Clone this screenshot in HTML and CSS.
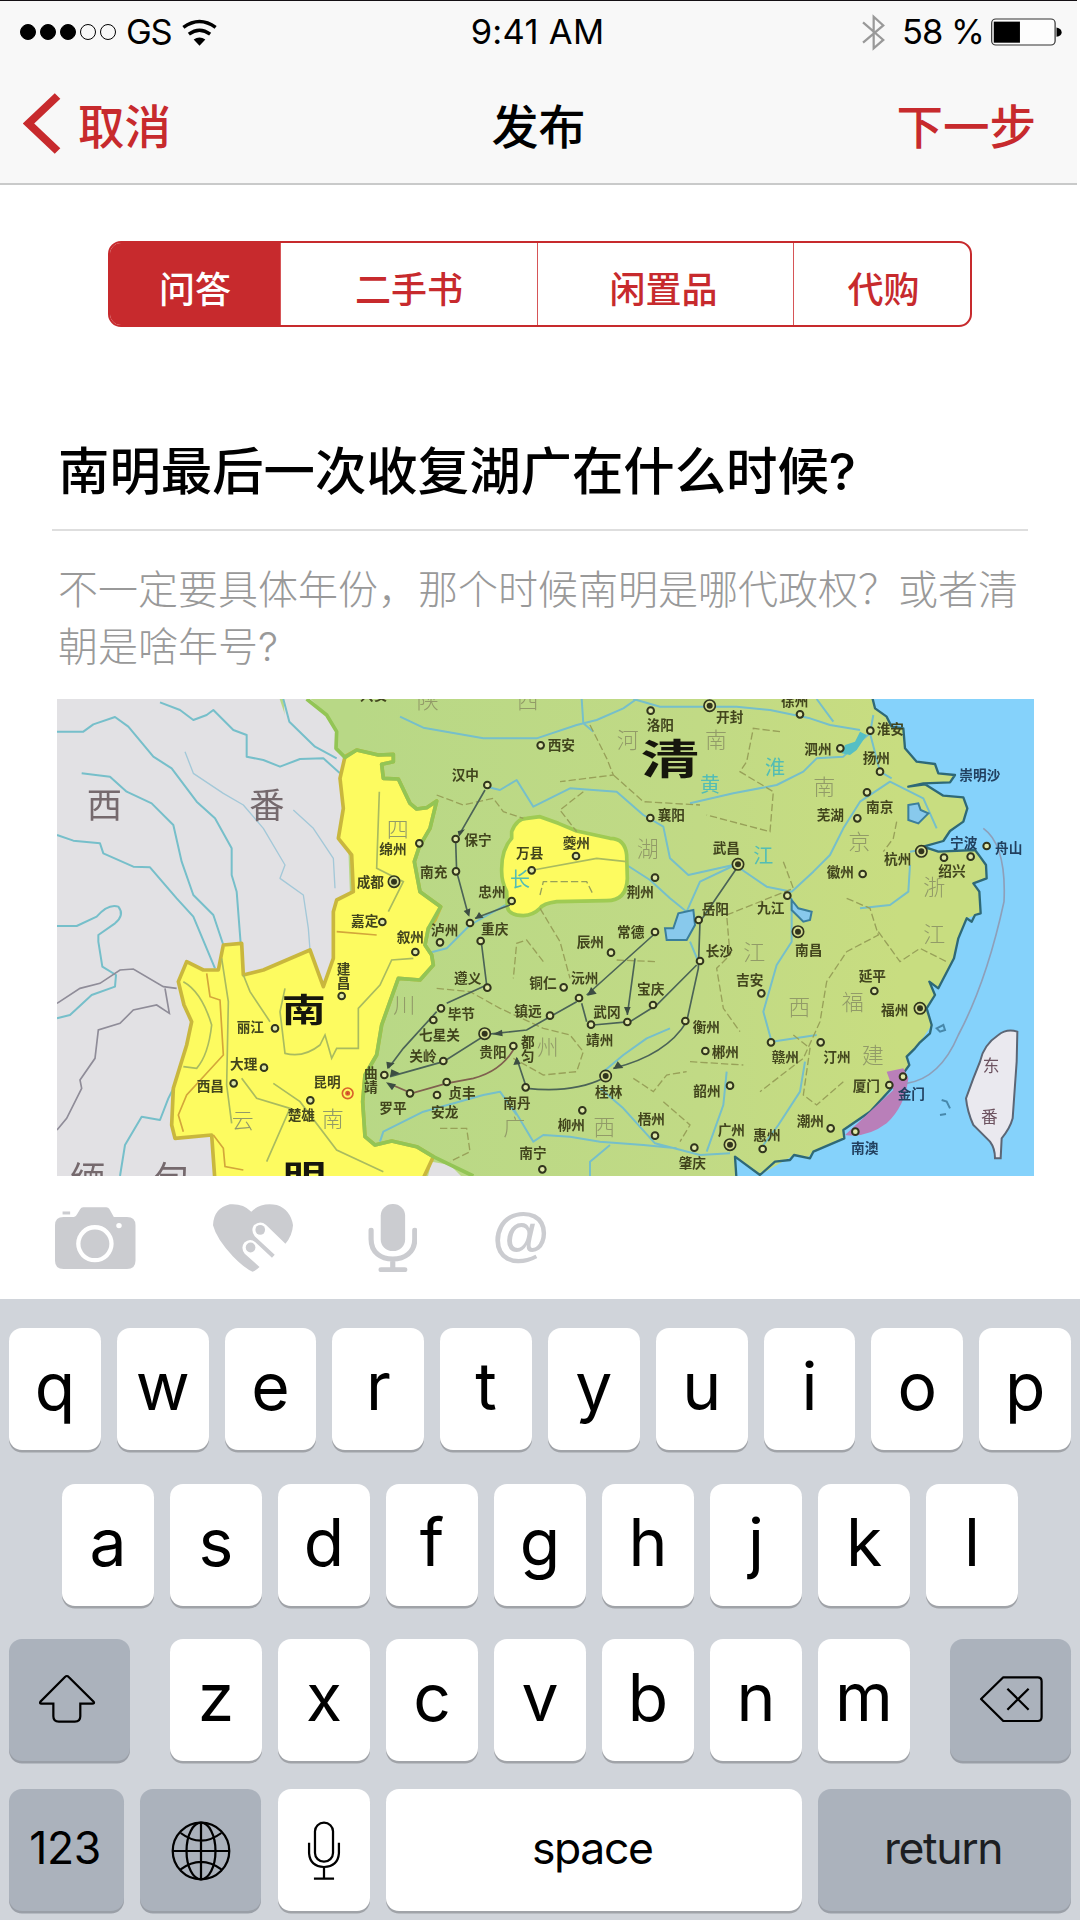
FILE: index.html
```html
<!DOCTYPE html>
<html lang="zh-CN">
<head>
<meta charset="utf-8">
<title>发布</title>
<link rel="stylesheet" href="styles.css">
</head>
<body>
<div class="screen">
  <header class="header">
    <div class="status">
      <div class="status-left">
        <span class="signal"><i class="dot on"></i><i class="dot on"></i><i class="dot on"></i><i class="dot"></i><i class="dot"></i></span>
        <span class="carrier">GS</span>
        <svg class="wifi" viewBox="533 52 102 80" preserveAspectRatio="none"><g fill="none" stroke="#000" stroke-width="10"><path d="M537 77Q584 42 631 77"/><path d="M553 97Q584 74 615 97"/></g><path d="M567 113Q584 101 601 113L584 131Z"/></svg>
      </div>
      <div class="time">9:41 AM</div>
      <div class="status-right">
        <svg class="bluetooth" viewBox="934 38 67 110" preserveAspectRatio="none"><path d="M937 63L996 115L968 140V46L996 72L937 123" fill="none" stroke="#999" stroke-width="6.5"/></svg>
        <span class="percent">58 %</span>
        <svg class="battery" viewBox="1309 48 206 85" preserveAspectRatio="none"><rect x="1311" y="51" width="184" height="79" rx="12" fill="#fdfdfd" stroke="#333" stroke-width="3.5"/><path d="M1317 59H1393V123H1317Z"/><path d="M1499 77Q1514 80 1514 92Q1514 102 1499 105Z"/></svg>
      </div>
    </div>
    <nav class="nav">
      <a class="back"><svg viewBox="66 278 110 182" preserveAspectRatio="none"><path d="M166 287L82 369L166 451" fill="none" stroke="#c72a2d" stroke-width="23"/></svg><span>取消</span></a>
      <h1>发布</h1>
      <a class="next">下一步</a>
    </nav>
  </header>

  <main class="editor">
    <div class="segments">
      <span class="segment active">问答</span><span class="segment">二手书</span><span class="segment">闲置品</span><span class="segment">代购</span>
    </div>
    <h2 class="question">南明最后一次收复湖广在什么时候?</h2>
    <p class="detail">不一定要具体年份，那个时候南明是哪代政权？或者清朝是啥年号?</p>

    <svg class="map" viewBox="21 12 2931 1431" preserveAspectRatio="none">
      <defs>
        <filter id="soft" x="0" y="0" width="100%" height="100%"><feGaussianBlur stdDeviation="2.2"/></filter>
        <linearGradient id="land"><stop offset=".3" stop-color="#b8d886"/><stop offset=".65" stop-color="#c1da85"/><stop offset=".85" stop-color="#c8dd80"/></linearGradient>
      </defs>
      <rect x="0" y="0" width="3000" height="1500" fill="url(#land)"/>
      <g filter="url(#soft)">
        <path fill="#e2e1e4" d="M0 0H685L705 60L735 100L800 160L885 190L900 600L860 900L600 1100L500 1460H0Z"/>
        <path fill="#e2e1e4" d="M700 0H770L830 60L860 110L858 160L885 190L800 170L705 80Z"/>
        <path fill="#e2e1e4" d="M1130 1460L1145 1400L1200 1410L1250 1460Z"/>
        <path class="sea" d="M2465 0L2475 40L2510 65L2525 95L2560 100L2565 160L2600 200L2655 207L2665 235L2715 240L2700 262L2620 265L2575 275L2625 268L2680 302L2740 307L2752 340L2740 380L2700 408L2680 438L2620 455L2665 470L2775 465L2790 485L2808 510L2810 550L2770 565L2788 590L2792 655L2750 670L2725 730L2712 790L2665 880L2638 860L2655 900L2630 940L2645 990L2610 1042L2595 1060L2570 1085L2578 1110L2560 1135L2520 1185L2460 1250L2380 1305L2383 1330L2290 1370L2270 1390L2232 1380L2130 1440L2055 1385L2060 1460H3000V0Z"/>
        <g class="river">
          <path d="M21 110H100L130 88L195 66L235 95L310 185L365 220L440 320L495 370L545 460V540L560 590L572 745"/>
          <path d="M95 235L180 245L230 290L305 325L370 390L395 500L430 600L490 660L520 750L510 830L535 920L530 1170L545 1280"/>
          <path d="M21 420L70 437L150 445L160 475L250 515L300 517L380 610L430 665L495 820"/>
          <path d="M330 22L390 45L430 75L470 60L490 45L550 105L590 120V185L640 195L690 215L750 192L820 190L870 235"/>
          <path d="M700 12L718 80L795 155L860 190"/>
          <path d="M21 693H80L140 665Q175 625 205 635Q225 660 195 685L145 720V740L157 815L198 840L195 875L125 900L60 960L21 970"/>
          <path d="M210 1443L225 1350L275 1265L330 1275L355 1210L370 1180"/>
          <path d="M1100 790L1150 770L1190 760L1260 690L1385 620L1440 560L1450 525L1640 490L1730 510L1800 555L1860 610L1910 650L1950 560L2055 510L2150 575L2225 590L2290 530L2340 480L2380 400L2430 320L2520 260L2620 310L2660 400"/>
          <path d="M1050 65L1120 98L1300 130L1460 130L1580 90L1640 75L1720 40L1760 12M1595 12L1600 85L1630 110"/>
          <path d="M1310 275L1350 285L1400 255L1450 335L1560 280L1700 290L1780 360L1840 395L1860 490L1915 540L2060 508"/>
          <path d="M1750 12L1830 35L2060 35L2160 45L2280 70L2340 90L2430 105M2300 12L2350 80M2470 60L2460 115L2400 165L2380 185L2300 190L2260 230L2180 270L2050 295L1920 325M2460 115L2490 230L2525 250"/>
          <path d="M1650 1180L1720 1240L1815 1345L1950 1380L2040 1375M1390 1240L1450 1340L1480 1320L1560 1325L1650 1340L1780 1350L1880 1360M1680 1350L1620 1400V1443M990 1340L1000 1310L1120 1250L1300 1200L1350 1190L1400 1260"/>
          <path d="M1660 1130L1720 1080L1790 1030L1860 1000M1920 740L1945 800M2225 610L2225 740L2180 810L2140 950L2165 1040L2300 1020M2265 1100L2250 1190L2185 1290L2140 1350M2030 1130L2020 1230L1970 1370M2580 510L2575 590L2520 630L2430 640M2640 460L2580 470"/>
          <path class="thin" d="M405 170L430 235L520 295L580 330L640 400L705 510L690 550L760 600L775 700L780 765M730 345L790 400L850 490L855 580"/>
        </g>
        <path d="M2375 175L2385 150L2415 140L2430 110L2450 120L2420 165L2400 180Z" fill="#54bfc4"/>
        <path class="border-gray" d="M21 925L90 880L150 865L210 825L250 822L340 875L380 880M345 880L358 955L320 930L250 945L210 985L145 1005L135 1090L90 1155L95 1180L50 1270L21 1305"/>
        <path class="ming" d="M885 185L920 165L985 180L1030 178V200L995 208L1000 250L1045 252L1080 325L1100 342L1130 338L1160 318L1140 400L1108 455L1093 500L1110 590L1172 635L1155 675L1135 700L1125 750L1145 780L1150 810L1110 855L1045 850L1020 920L995 990L980 1080L945 1140L938 1220L945 1325L975 1350L1025 1338L1100 1355L1150 1385L1115 1460H495L485 1320L375 1330L365 1290L370 1180L410 1050L425 980L402 930L385 860L410 800L460 825L505 825L520 750L575 745L580 840L640 825L780 765L820 875L850 790V650L860 615L910 590L905 480L865 430L880 340L870 250Z"/>
        <path class="green-edge" d="M770 12L830 60L860 110L858 160L885 187L920 165L985 180L1030 178V200L995 208L1000 250L1045 252L1080 325L1100 342L1130 338L1160 318L1140 400L1108 455L1093 500L1110 590L1172 635L1135 700L1125 750L1145 780L1150 810L1110 855L1045 850L1020 920L995 990L980 1080L945 1140L938 1220L945 1325L975 1350L1025 1338L1100 1355L1150 1385L1270 1443"/>
        <path class="ming kui" d="M1385 410Q1400 370 1430 370L1470 365L1525 385L1580 408L1680 430Q1725 430 1730 480L1732 550Q1730 617 1670 617L1520 620Q1480 625 1470 640Q1450 660 1420 662Q1375 660 1372 635L1370 590Q1355 560 1355 530Q1353 465 1385 430Z"/>
        <g class="yellow-lines"><path d="M515 790L535 920L530 1170L545 1285M580 840L600 890L660 980M400 860Q455 890 485 990Q475 1080 440 1120L400 1115M705 880L690 950L705 1075Q760 1090 810 1050L825 1020L845 1090L860 1060H925V940L990 870L1025 795L1090 790M575 1150L620 1210L720 1240L650 1400M670 1165L750 1220L860 1365L1000 1430M988 290L980 520L1060 560L1015 650M1450 525L1640 490L1730 500"/></g>
        <path class="orange-lines" d="M470 835L480 905L510 915L520 1080L465 1140L410 1200L385 1260L400 1310M490 1320L520 1360L525 1415L580 1425M860 710L980 720"/>
        <g class="dashes">
          <path d="M1160 300L1240 330L1330 310L1360 350L1420 370M1620 90L1670 190L1690 240L1530 260M1690 240L1780 320L1950 330M1600 290L1530 345L1580 410M1470 640L1530 740L1560 850M1480 800L1430 735L1400 745L1390 850M1160 880L1260 890L1350 940L1480 1000L1560 1020L1600 1070L1580 1130L1480 1140L1390 1090M1700 795L1820 800M1470 600L1480 560H1610L1630 600"/>
          <path d="M2190 110L2110 100L2090 200L2070 230L2170 290L2160 410L1970 360M2540 380L2530 430L2500 470M2200 500L2230 580L2030 660L2040 780L2000 820L2020 940L2070 1010M2390 610L2460 640L2485 720L2390 770L2330 860L2310 980L2260 1090L2130 1190M2485 710L2550 800L2610 760L2690 800M2230 1020L2280 1060L2260 1200L2300 1230L2380 1160M1920 1100L2080 1110M1750 1150L1810 1190L1850 1140L1910 1130M1840 1220L1920 1290L1890 1340M1170 1300H1250L1260 1370L1200 1400"/>
        </g>
        <path class="coast" d="M2465 0L2475 40L2510 65L2525 95L2560 100L2565 160L2600 200L2655 207L2665 235L2715 240L2700 262L2620 265L2575 275L2625 268L2680 302L2740 307L2752 340L2740 380L2700 408L2680 438L2620 455L2665 470L2775 465L2790 485L2808 510L2810 550L2770 565L2788 590L2792 655L2775 660L2765 680L2750 670L2725 730L2712 790L2665 880L2638 860L2655 900L2630 940L2645 990L2640 1015L2610 1042L2595 1060L2570 1085L2578 1110L2560 1135L2520 1185L2460 1250L2380 1305L2383 1330L2290 1370L2280 1390L2232 1380L2220 1395L2175 1400L2130 1440L2055 1385L2060 1460"/>
        <path d="M2510 1130L2560 1120L2575 1150Q2565 1235 2510 1285Q2450 1330 2385 1320L2460 1250L2530 1185Z" fill="#b97fb9"/>
        <path d="M1845 700L1870 700L1885 655L1930 645L1935 690L1910 735L1850 735ZM2225 615L2245 640L2285 650L2280 675L2260 680L2225 645ZM2575 330L2605 325L2612 345L2635 355L2605 385L2575 375Z" fill="#88c9ec" stroke="#3a7e9b" stroke-width="6"/>
        <path d="M2845 1020Q2870 1000 2902 1010L2900 1100L2895 1170L2888 1270Q2880 1300 2855 1330L2852 1390H2835Q2835 1360 2820 1340L2770 1290Q2752 1250 2748 1210L2770 1150L2790 1100Q2800 1050 2845 1020Z" fill="#eae9ef" stroke="#5c6675" stroke-width="6"/>
        <path d="M2800 400Q2870 450 2862 620Q2810 860 2725 1020Q2670 1150 2570 1165" fill="none" stroke="#8e9fb9" stroke-width="5"/>
        <path d="M2675 1215l15 5l10 20M2670 1260l18-3M2660 1000l20-10l5 15l-15 5Z" fill="none" stroke="#4788ab" stroke-width="6"/>
        <g class="routes">
          <path d="M1305 285L1230 415M1217 440L1220 530L1255 660M1380 630L1275 670M1295 750L1310 870L1190 925M1160 950L1060 1060L1015 1120M1810 720L1610 900M1755 790L1732 960M1580 920L1500 965L1430 1005L1310 1018L1180 1100L1020 1145M1595 925L1610 980M1940 810L1820 930L1740 980L1630 990M2060 520L1950 680L1945 820L1910 980Q1850 1080 1690 1120M1660 1150Q1570 1195 1430 1180L1400 1090"/>
          <path class="maroon" d="M1390 1065Q1350 1130 1270 1150L1190 1165L1085 1195L1015 1165"/>
        </g>
        <path d="M1227 425l18-22-22 6zM1258 665l3-25-20 8zM1275 672l26-4-14-17zM1012 1122l22-17-25-5zM1612 902l28-6-17-20zM1732 960l10-24h-20zM1328 1018l30 6-2-20zM1020 1145l30-10-26-12zM1008 1162l18 24 12-18zM1690 1122l30-3-17-20zM1400 1085l-10 25 22-3z" fill="#3c4d43"/>

        <g class="province">
          <text x="1100" y="40">陕</text><text x="1400" y="40">西</text><text x="1010" y="425">四</text><text x="1030" y="955">川</text><text x="1460" y="1080">州</text><text x="1630" y="1320">西</text><text x="1360" y="1320">广</text><text x="1760" y="485">湖</text><text x="1700" y="160">河</text><text x="1965" y="160">南</text><text x="2290" y="300">南</text><text x="2395" y="465">京</text><text x="2620" y="600">浙</text><text x="2620" y="740">江</text><text x="2080" y="795">江</text><text x="2215" y="960">西</text><text x="2375" y="945">福</text><text x="2435" y="1105">建</text><text x="545" y="1300">云</text><text x="815" y="1295">南</text>
        </g>
        <g class="water"><text x="1380" y="575">长</text><text x="1950" y="290">黄</text><text x="2145" y="240">淮</text><text x="2110" y="505">江</text></g>
        <g class="tribe"><text x="110" y="370">西</text><text x="598" y="370">番</text><text x="60" y="1490">缅</text><text x="310" y="1490">甸</text></g>
        <g class="island"><text x="2798" y="1130">东</text><text x="2793" y="1285">番</text></g>
        <g class="realm"><text transform="translate(1772 236) scale(1.42 1)" font-size="124">清</text><text transform="translate(695 981) scale(1.35 1)" font-size="98">南</text><text transform="translate(698 1482) scale(1.3 1)" font-size="100">明</text></g>

        <g class="city">
          <text x="560" y="1012">丽江</text><text x="540" y="1122">大理</text><text x="440" y="1187">西昌</text><text x="790" y="1175">昆明</text><text x="713" y="1275">楚雄</text><text x="860" y="838">建</text><text x="860" y="878">昌</text><text x="920" y="575">成都</text><text x="903" y="693">嘉定</text>
          <text x="1493" y="165">西安</text><text x="1205" y="255">汉中</text><text x="1243" y="450">保宁</text><text x="1110" y="545">南充</text><text x="988" y="477">绵州</text><text x="1285" y="605">忠州</text><text x="1398" y="490">万县</text><text x="1538" y="458">夔州</text><text x="1143" y="720">泸州</text><text x="1040" y="742">叙州</text><text x="1293" y="716">重庆</text><text x="1212" y="865">遵义</text><text x="1193" y="972">毕节</text><text x="1107" y="1035">七星关</text><text x="1078" y="1098">关岭</text><text x="1288" y="1087">贵阳</text><text x="1413" y="1056">都</text><text x="1413" y="1098">匀</text><text x="1195" y="1210">贞丰</text><text x="1143" y="1265">安龙</text><text x="988" y="1255">罗平</text><text x="942" y="1150">曲</text><text x="942" y="1192">靖</text><text x="1360" y="1240">南丹</text><text x="1523" y="1305">柳州</text><text x="1408" y="1390">南宁</text><text x="1763" y="1287">梧州</text><text x="1635" y="1205">桂林</text><text x="1701" y="725">常德</text><text x="1580" y="755">辰州</text><text x="1438" y="880">铜仁</text><text x="1563" y="865">沅州</text><text x="1393" y="963">镇远</text><text x="1630" y="965">武冈</text><text x="1608" y="1050">靖州</text><text x="1761" y="897">宝庆</text><text x="1928" y="1010">衡州</text><text x="1730" y="607">荆州</text><text x="1823" y="375">襄阳</text><text x="1790" y="105">洛阳</text><text x="1886" y="1420">肇庆</text><text x="930" y="16">兴安</text>
          <text x="1998" y="80">开封</text><text x="2193" y="32">徐州</text><text x="2480" y="118">淮安</text><text x="2263" y="178">泗州</text><text x="2438" y="205">扬州</text><text x="2448" y="352">南京</text><text x="2300" y="374">芜湖</text><text x="1988" y="475">武昌</text><text x="2502" y="508">杭州</text><text x="2665" y="542">绍兴</text><text x="2330" y="545">徽州</text><text x="1955" y="658">岳阳</text><text x="2121" y="655">九江</text><text x="2235" y="780">南昌</text><text x="1967" y="782">长沙</text><text x="2058" y="870">吉安</text><text x="2426" y="858">延平</text><text x="2493" y="960">福州</text><text x="2165" y="1100">赣州</text><text x="2320" y="1102">汀州</text><text x="1985" y="1087">郴州</text><text x="1930" y="1202">韶州</text><text x="2408" y="1187">厦门</text><text x="2240" y="1293">潮州</text><text x="2003" y="1320">广州</text><text x="2110" y="1335">惠州</text>
        </g>
        <g class="city at-sea"><text x="2728" y="255">崇明沙</text><text x="2700" y="460">宁波</text><text x="2835" y="475">舟山</text><text x="2543" y="1212">金门</text><text x="2403" y="1375">南澳</text></g>
        <g class="town">
          <circle cx="675" cy="1000" r="10"/><circle cx="642" cy="1118" r="10"/><circle cx="551" cy="1165" r="10"/><circle cx="781" cy="1216" r="10"/><circle cx="875" cy="903" r="10"/><circle cx="997" cy="681" r="10"/><circle cx="1472" cy="151" r="10"/><circle cx="1312" cy="270" r="10"/><circle cx="1217" cy="432" r="10"/><circle cx="1218" cy="529" r="10"/><circle cx="1108" cy="445" r="10"/><circle cx="1385" cy="618" r="10"/><circle cx="1445" cy="526" r="10"/><circle cx="1578" cy="483" r="10"/><circle cx="1170" cy="742" r="10"/><circle cx="1096" cy="771" r="10"/><circle cx="1260" cy="684" r="10"/><circle cx="1292" cy="738" r="10"/><circle cx="1312" cy="878" r="10"/><circle cx="1173" cy="940" r="10"/><circle cx="1150" cy="975" r="10"/><circle cx="1180" cy="1098" r="10"/><circle cx="1390" cy="1053" r="10"/><circle cx="1190" cy="1161" r="10"/><circle cx="1161" cy="1200" r="10"/><circle cx="1080" cy="1195" r="10"/><circle cx="1003" cy="1140" r="10"/><circle cx="1427" cy="1177" r="10"/><circle cx="1597" cy="1246" r="10"/><circle cx="1477" cy="1423" r="10"/><circle cx="1815" cy="1322" r="10"/><circle cx="1815" cy="711" r="10"/><circle cx="1683" cy="773" r="10"/><circle cx="1541" cy="877" r="10"/><circle cx="1587" cy="909" r="10"/><circle cx="1500" cy="962" r="10"/><circle cx="1732" cy="981" r="10"/><circle cx="1623" cy="989" r="10"/><circle cx="1809" cy="930" r="10"/><circle cx="1906" cy="978" r="10"/><circle cx="1815" cy="548" r="10"/><circle cx="1801" cy="369" r="10"/><circle cx="1802" cy="47" r="10"/><circle cx="1933" cy="1358" r="10"/>
          <circle cx="2250" cy="58" r="10"/><circle cx="2461" cy="107" r="10"/><circle cx="2371" cy="160" r="10"/><circle cx="2490" cy="230" r="10"/><circle cx="2451" cy="292" r="10"/><circle cx="2422" cy="370" r="10"/><circle cx="2762" cy="485" r="10"/><circle cx="2682" cy="488" r="10"/><circle cx="2810" cy="453" r="10"/><circle cx="2438" cy="537" r="10"/><circle cx="1946" cy="675" r="10"/><circle cx="2212" cy="602" r="10"/><circle cx="1950" cy="798" r="10"/><circle cx="2134" cy="895" r="10"/><circle cx="2473" cy="888" r="10"/><circle cx="2163" cy="1042" r="10"/><circle cx="2312" cy="1042" r="10"/><circle cx="1966" cy="1068" r="10"/><circle cx="2040" cy="1172" r="10"/><circle cx="2518" cy="1170" r="10"/><circle cx="2559" cy="1145" r="10"/><circle cx="2342" cy="1300" r="10"/><circle cx="2416" cy="1310" r="10"/><circle cx="2138" cy="1362" r="10"/>
        </g>
        <g class="capital-ring"><circle cx="1032" cy="560" r="17"/><circle cx="1304" cy="1016" r="17"/><circle cx="1667" cy="1143" r="17"/><circle cx="1979" cy="32" r="17"/><circle cx="2064" cy="508" r="17"/><circle cx="2614" cy="469" r="17"/><circle cx="2244" cy="710" r="17"/><circle cx="2610" cy="940" r="17"/><circle cx="2040" cy="1349" r="17"/></g>
        <g class="capital"><circle cx="1032" cy="560" r="9"/><circle cx="1304" cy="1016" r="9"/><circle cx="1667" cy="1143" r="9"/><circle cx="1979" cy="32" r="9"/><circle cx="2064" cy="508" r="9"/><circle cx="2614" cy="469" r="9"/><circle cx="2244" cy="710" r="9"/><circle cx="2610" cy="940" r="9"/><circle cx="2040" cy="1349" r="9"/></g>
        <g fill="none" stroke="#d8642c" stroke-width="5"><circle cx="893" cy="1195" r="16"/><circle cx="893" cy="1195" r="5" fill="#c33"/></g>
      </g>
    </svg>

    <div class="tools">
      <svg class="camera" viewBox="43 50 234 187" preserveAspectRatio="none"><path fill="#cbccd0" fill-rule="evenodd" d="M125 51H192Q198 51 201 56L214 80H252Q277 80 277 105V212Q277 237 252 237H68Q43 237 43 212V105Q43 80 68 80H98Q105 78 108 70L116 57Q119 51 125 51ZM159 104A54 56 0 1 0 159 217A54 56 0 1 0 159 104ZM229 98A8 8 0 1 0 229 114A8 8 0 1 0 229 98Z"/><ellipse cx="159" cy="161" rx="42" ry="43" fill="#cbccd0"/><path d="M65 68H87" stroke="#cbccd0" stroke-width="9"/></svg>
      <svg class="heart" viewBox="501 41 232 205" preserveAspectRatio="none"><path fill="#cbccd0" d="M612 64Q640 35 686 44Q726 58 733 105Q731 136 711 161L655 104Q637 88 619 106Q610 122 622 138L680 194L672 203L624 156Q608 142 592 157Q580 173 593 191L636 231Q625 242 616 245Q593 235 559 199Q511 146 501 105Q503 53 550 42Q588 39 612 64Z"/><ellipse cx="638" cy="119" rx="14" ry="15" fill="#cbccd0"/><ellipse cx="610" cy="172" rx="14" ry="15" fill="#cbccd0"/></svg>
      <svg class="mic" viewBox="950 42 144 205" preserveAspectRatio="none"><rect x="987" y="42" width="71" height="142" rx="35" fill="#cbccd0"/><path d="M959 121V148C959 188 988 208 1022 208S1086 188 1086 148V121M1022 208V240M988 240H1057" fill="none" stroke="#cbccd0" stroke-width="15" stroke-linecap="round"/></svg>
      <span class="at">@</span>
    </div>
  </main>

  <section class="keyboard">
    <div class="row"><kbd>q</kbd><kbd>w</kbd><kbd>e</kbd><kbd>r</kbd><kbd>t</kbd><kbd>y</kbd><kbd>u</kbd><kbd>i</kbd><kbd>o</kbd><kbd>p</kbd></div>
    <div class="row"><kbd>a</kbd><kbd>s</kbd><kbd>d</kbd><kbd>f</kbd><kbd>g</kbd><kbd>h</kbd><kbd>j</kbd><kbd>k</kbd><kbd>l</kbd></div>
    <div class="row spread">
      <kbd class="dark mod"><svg class="shift" viewBox="110 163 170 150" preserveAspectRatio="none"><path d="M189 172L117 246Q114 252 120 252H155V290Q155 306 171 306H218Q234 306 234 290V252H269Q277 252 273 246L200 172Q195 166 189 172Z" fill="none" stroke="#000" stroke-width="6.5"/></svg></kbd>
      <div class="letters"><kbd>z</kbd><kbd>x</kbd><kbd>c</kbd><kbd>v</kbd><kbd>b</kbd><kbd>n</kbd><kbd>m</kbd></div>
      <kbd class="dark mod"><svg class="delete" viewBox="1274 168 190 144" preserveAspectRatio="none"><path d="M1345 175H1446Q1457 175 1457 187V294Q1457 306 1446 306H1345L1280 240ZM1357 209L1419 272M1419 209L1357 272" fill="none" stroke="#000" stroke-width="6.5" stroke-linejoin="round"/></svg></kbd>
    </div>
    <div class="row last">
      <kbd class="dark numbers">123</kbd>
      <kbd class="dark mod"><svg class="globe" viewBox="499 605 174 180" preserveAspectRatio="none"><g fill="none" stroke="#000" stroke-width="6.5"><ellipse cx="586" cy="695" rx="82" ry="85"/><ellipse cx="586" cy="695" rx="42" ry="85"/><path d="M586 610V780M504 695H668M527 641Q586 687 645 641M527 750Q586 705 645 750"/></g></svg></kbd>
      <kbd><svg class="dictate" viewBox="892 605 98 180" preserveAspectRatio="none"><g fill="none" stroke="#000" stroke-width="6.5"><rect x="915" y="610" width="52" height="117" rx="26"/><path d="M898 670V702Q901 741 941 743Q981 741 984 702V670M941 743V778M912 778H970"/></g></svg></kbd>
      <kbd class="space">space</kbd>
      <kbd class="dark return">return</kbd>
    </div>
  </section>
</div>
</body>
</html>
```
FILE: styles.css
```css
* { box-sizing: border-box; }
body { margin: 0; background: #fff; font-family: Inter, "Noto Sans CJK SC", sans-serif; color: #000; }
svg { display: block; flex: none; }
.screen { width: 1080px; height: 1920px; display: flex; flex-direction: column; overflow: hidden; }

.header { flex: none; width: 1077px; height: 185px; border-top: 1px solid #141014; border-bottom: 2px solid #c9caca; background: #f8f8f8; }
.status { height: 62px; display: grid; grid-template-columns: 1fr auto 1fr; align-items: center; font-size: 34.5px; line-height: 40px; }
.status-left { display: flex; align-items: center; padding-left: 20px; }
.signal { display: flex; gap: 4px; }
.dot { width: 16px; height: 16px; border: 1.5px solid #000; border-radius: 50%; }
.dot.on { background: #000; }
.carrier { margin-left: 10px; letter-spacing: -1.2px; width: 47px; }
.wifi { width: 35px; height: 27px; margin-left: 9px; }
.time { letter-spacing: 0.3px; margin-right: 2px; }
.status-right { display: flex; justify-content: flex-end; align-items: center; padding-right: 15px; }
.bluetooth { width: 23px; height: 37px; margin-right: 17px; }
.percent { width: 78px; letter-spacing: -1px; white-space: nowrap; margin-right: 11px; }
.battery { width: 71px; height: 28px; }

.nav { height: 120px; display: grid; grid-template-columns: 1fr auto 1fr; align-items: center; font-size: 46.5px; line-height: 60px; font-weight: 500; color: #c72a2d; padding: 0 41px 0 23px; }
.back { display: flex; align-items: center; gap: 17px; }
.back svg { width: 38px; height: 61px; margin-top: 1px; }
.back span, .next, .nav h1 { padding-top: 7px; }
.nav h1 { margin: 0 0 0 18px; font-size: 47px; line-height: 60px; font-weight: 500; color: #000; }
.next { text-align: right; }

.editor { flex: none; height: 1114px; display: flex; flex-direction: column; padding: 56px 46px 0 52px; }
.segments { flex: none; width: 864px; height: 86px; margin-left: 56px; border: 2.5px solid #c72a2d; border-radius: 13px; display: grid; grid-template-columns: 170px 257px 256px 1fr; overflow: hidden; }
.segment { display: flex; align-items: center; justify-content: center; padding: 11px 0 0; font-size: 36px; line-height: 50px; font-weight: 500; color: #c72a2d; border-left: 1.5px solid #d65557; }
.segment.active { background: #c72a2d; color: #fff; border: 0; }
.segment:nth-child(3) { padding-right: 4px; }
.segment:nth-child(4) { padding-left: 3px; }
.question { flex: none; height: 204px; width: 976px; margin: 0; padding: 109px 0 0 6px; border-bottom: 2px solid #dedede; font-size: 51.4px; line-height: 70px; font-weight: 500; white-space: nowrap; }
.detail { flex: none; height: 168px; width: 975px; margin: 0; padding: 30px 0 0 6px; font-size: 40px; line-height: 57px; font-weight: 300; color: #999; }
.map { width: 977px; height: 477px; margin-left: 5px; }

.tools { display: flex; align-items: flex-start; padding: 28px 0 0 3px; }
.camera { width: 80.5px; height: 62px; margin-top: 3px; }
.heart { width: 80px; height: 68px; margin-left: 77px; }
.mic { width: 49.5px; height: 68px; margin-left: 75px; }
.at { margin: 0 0 0 75px; color: #cbccd0; font: bold 59px/60px "Liberation Sans", sans-serif; }

.keyboard { flex: 1; min-height: 0; background: #d0d4da; padding: 29px 9px 0; }
.row { display: flex; justify-content: center; gap: 16px; height: 122px; margin-bottom: 33.5px; }
.row.spread { justify-content: space-between; margin-bottom: 28px; }
.row.last { justify-content: space-between; }
.letters { display: flex; gap: 16px; }
kbd { width: 92px; height: 122px; display: flex; align-items: center; justify-content: center; padding-bottom: 6px; border-radius: 13px; background: #fff; box-shadow: 0 2.5px 0 #a0a3a8; font: 400 66px/80px Inter, sans-serif; }
kbd.dark { background: #abb2bc; box-shadow: 0 2.5px 0 #9a9fa7; }
kbd.mod { width: 121px; }
kbd.numbers { width: 115px; }
kbd.space { width: 416px; }
kbd.return { width: 253px; color: #1c1e22; }
kbd.numbers, kbd.space, kbd.return { font-size: 44.5px; padding: 0 3px 4px 0; letter-spacing: -1.4px; }
kbd.numbers { letter-spacing: -0.4px; }
.shift { width: 58px; height: 50px; margin-left: -5px; margin-top: 4px; }
.delete { width: 65px; height: 48px; margin-left: 2px; margin-top: 4px; }
.globe { width: 60px; height: 60px; margin-top: 8px; }
.dictate { width: 34px; height: 60px; margin-top: 8px; }

.sea { fill: #85d2fb; }
.river { fill: none; stroke: #76bfca; stroke-width: 6; stroke-linejoin: round; }
.river .thin { stroke: #a3c8d8; stroke-width: 4; }
.border-gray { fill: none; stroke: #8f8c98; stroke-width: 5; }
.ming { fill: #fdfb60; stroke: #c9b73e; stroke-width: 11; stroke-linejoin: round; }
.ming.kui { stroke: #9fcb53; }
.green-edge { fill: none; stroke: #93c555; stroke-width: 11; stroke-linejoin: round; }
.yellow-lines { fill: none; stroke: #a9bb5f; stroke-width: 5; }
.orange-lines { fill: none; stroke: #d3a63a; stroke-width: 5; }
.dashes { fill: none; stroke: #98a159; stroke-width: 4; stroke-dasharray: 22 9; }
.coast { fill: none; stroke: #2f6977; stroke-width: 7; stroke-linejoin: round; }
.routes { fill: none; stroke: #4c6457; stroke-width: 5; }
.routes .maroon { stroke: #80604f; }
.map text { font-family: "Noto Sans CJK SC", sans-serif; }
.province { font-size: 66px; fill: #929b68; font-weight: 300; }
.water { font-size: 60px; fill: #52bdb5; }
.tribe { font-size: 106px; fill: #75696d; }
.island { font-size: 50px; fill: #6d5360; }
.realm { font-weight: 700; fill: #16160c; }
.city { font-size: 41px; font-weight: 700; fill: #42451f; }
.city.at-sea { fill: #213f5e; }
.town circle { fill: #e0e8a8; stroke: #30351f; stroke-width: 6; }
.capital-ring circle { fill: #d5dd91; stroke: #30351f; stroke-width: 5; }
.capital circle { fill: #30351f; }
```
